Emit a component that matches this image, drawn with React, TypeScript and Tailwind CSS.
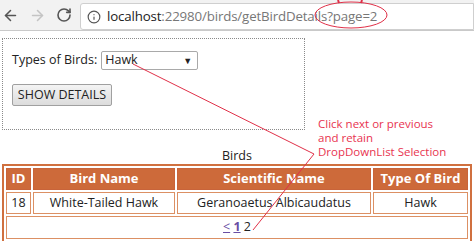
import { ArrowLeft, ArrowRight, RotateCw, Info } from 'lucide-react'

const birds = [
  { id: 18, name: 'White-Tailed Hawk', scientific: 'Geranoaetus Albicaudatus', type: 'Hawk' },
]

function App() {
  return (
    <div className="relative w-[474px] h-[241px] overflow-hidden bg-white font-['Open_Sans',sans-serif] text-[#222]">
      {/* browser chrome */}
      <div className="h-[31px] flex items-center bg-[#f2f2f2] border-b border-[#c9c9c9]">
        <div className="flex items-center gap-[10px] pl-[2px] w-[80px] text-[#555]">
          <ArrowLeft size={17} strokeWidth={2.2} />
          <ArrowRight size={17} strokeWidth={2.2} className="text-[#c4c4c4]" />
          <RotateCw size={16} strokeWidth={2.4} />
        </div>
        <div className="flex-1 h-[27px] mt-[3px] flex items-center gap-[6px] pl-[6px] bg-white border border-[#cfcfcf] rounded-l-[3px] text-[13.3px] tracking-[-0.15px]">
          <Info size={14} strokeWidth={2} className="text-[#555]" />
          <span>
            <span className="text-[#222]">localhost</span>
            <span className="text-[#777]">:22980/birds/getBirdDetails?page=2</span>
          </span>
        </div>
      </div>

      {/* form panel */}
      <div className="ml-[2px] mt-[7px] w-[303px] h-[92px] border border-dotted border-[#8a8a8a] pl-[9px] pt-[12px] text-[12.5px]">
        <div className="flex items-center gap-[4px]">
          <span>Types of Birds:</span>
          <div className="w-[97px] h-[19px] border border-[#a9a9a9] rounded-[2px] flex items-center justify-between px-[3px]">
            <span>Hawk</span>
            <span className="text-[9px] pr-[2px]">▼</span>
          </div>
        </div>
        <button className="mt-[14px] h-[22px] w-[100px] border border-[#a0a0a0] rounded-[2px] bg-gradient-to-b from-[#f4f4f4] to-[#dcdcdc] text-[12.5px] text-[#222]">
          SHOW DETAILS
        </button>
      </div>

      {/* annotation */}
      <div className="absolute left-[318px] top-[117px] text-[11.5px] leading-[14px] text-[#e8334f]">
        <p>Click next or previous</p>
        <p>and retain</p>
        <p>DropDownList Selection</p>
      </div>

      {/* table */}
      <p className="mt-[19px] text-center text-[12.5px] leading-[14px]">Birds</p>
      <table className="ml-[2px] mt-[1px] w-[470px] border-2 border-[#d0703f] border-separate border-spacing-[2px] text-[12.5px]">
        <thead>
          <tr className="bg-[#cd6a3a] text-white font-bold h-[22px] text-[13px]">
            <th className="w-[25px] border border-[#c8643a]">ID</th>
            <th className="w-[142px] border border-[#c8643a]">Bird Name</th>
            <th className="w-[194px] border border-[#c8643a]">Scientific Name</th>
            <th className="border border-[#c8643a]">Type Of Bird</th>
          </tr>
        </thead>
        <tbody>
          {birds.map((b) => (
            <tr key={b.id} className="h-[22px]">
              <td className="text-center border border-[#dc9064]">{b.id}</td>
              <td className="text-center border border-[#dc9064]">{b.name}</td>
              <td className="text-center border border-[#dc9064]">{b.scientific}</td>
              <td className="text-center border border-[#dc9064]">{b.type}</td>
            </tr>
          ))}
          <tr className="h-[23px]">
            <td colSpan={4} className="text-center border border-[#dc9064]">
              <span className="underline text-[#6a4ea3]">&lt;</span>{' '}
              <span className="underline text-[#6a4ea3] font-bold">1</span>{' '}
              <span>2</span>
            </td>
          </tr>
        </tbody>
      </table>

      {/* red markup */}
      <svg className="absolute inset-0 pointer-events-none" width="474" height="241">
        <ellipse cx="351" cy="15" rx="36" ry="13" fill="none" stroke="#e03048" strokeWidth="1" />
        <line x1="338" y1="0" x2="339" y2="3" stroke="#e03048" strokeWidth="2" />
        <line x1="362" y1="0" x2="361" y2="3" stroke="#e03048" strokeWidth="2" />
        <polyline points="133,64 314,154 253,230" fill="none" stroke="#e03048" strokeWidth="1" />
      </svg>
    </div>
  )
}

export default App
